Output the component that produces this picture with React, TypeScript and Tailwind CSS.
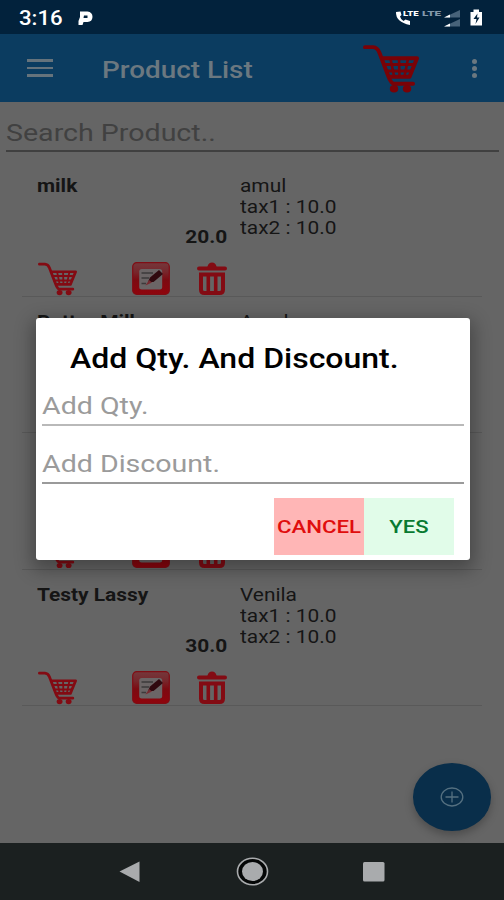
import type { ReactNode } from 'react';

const products = [
  { name: 'milk', brand: 'amul', price: '20.0' },
  { name: 'Butter Milk', brand: 'Amul', price: '15.0' },
  { name: 'Lassy', brand: 'Amul', price: '25.0' },
  { name: 'Testy Lassy', brand: 'Venila', price: '30.0' },
];

// Text on this screen is set wider than Roboto's natural width.
function Wide({
  children,
  scale = 'scale-x-[1.16]',
  className = '',
}: {
  children: ReactNode;
  scale?: string;
  className?: string;
}) {
  return (
    <span className={`block w-max origin-left whitespace-nowrap ${scale} ${className}`}>
      {children}
    </span>
  );
}

function CartIcon({ className }: { className: string }) {
  return (
    <svg viewBox="0 0 56 50" preserveAspectRatio="none" className={className} fill="none" stroke="currentColor">
      <path d="M2 3.2H10Q14.500 3.500 16.500 9L25 32Q28 40.500 31 40.500H50" strokeWidth="4" strokeLinecap="round" />
      <path d="M18.500 14.500H54L46.500 33.500H25" strokeWidth="4" strokeLinejoin="round" />
      <path d="M20 21H50M22 27.500H48" strokeWidth="3" />
      <path d="M27.500 15L31 33M36 15L36.500 33M45 15L41.500 33" strokeWidth="2.600" />
      <ellipse cx="31" cy="45.700" rx="4.200" ry="3.900" fill="currentColor" stroke="none" />
      <ellipse cx="44" cy="45.700" rx="4.200" ry="3.900" fill="currentColor" stroke="none" />
    </svg>
  );
}

function EditIcon() {
  return (
    <svg viewBox="0 0 38 33" preserveAspectRatio="none" className="h-[33px] w-[38px]">
      <defs>
        <linearGradient id="edit" x1="0" y1="0" x2="0" y2="1">
          <stop offset="0" stopColor="#74383c" />
          <stop offset="0.3" stopColor="#77262b" />
          <stop offset="0.55" stopColor="#7c0a11" />
          <stop offset="1" stopColor="#90040c" />
        </linearGradient>
      </defs>
      <rect x="0.7" y="0.7" width="36.6" height="31.6" rx="4" fill="url(#edit)" stroke="#800d14" strokeWidth="1.2" />
      <rect x="7.200" y="7" width="23" height="20.500" rx="2.500" fill="#6b6566" />
      <path d="M9.500 11H21M9.500 16H17M9.500 21.500H14" stroke="#3d3a3b" strokeWidth="1.300" />
      <path d="M16 20L18 15.500L27 8L31 12L21.500 20Z" fill="#30090f" />
      <path d="M13.500 23.500L17 18L20 20.500Z" fill="#762b31" />
    </svg>
  );
}

function TrashIcon() {
  return (
    <svg viewBox="0 0 30 33" preserveAspectRatio="none" className="h-[33px] w-[30px]" fill="none" stroke="#830b13">
      <path d="M2 6.500H28" strokeWidth="4" strokeLinecap="round" />
      <path d="M10.500 6V4.500Q11.500 0.500 15 0.500Q18.500 0.500 19.500 4.500V6Z" fill="#830b13" stroke="none" />
      <path d="M4 12.500H26V27.500Q26 31 22.500 31H7.500Q4 31 4 27.500Z" strokeWidth="4" />
      <path d="M11.300 12V29M18.700 12V29" strokeWidth="3.600" />
    </svg>
  );
}

function ProductRow({ name, brand, price }: { name: string; brand: string; price: string }) {
  return (
    <div className="mx-[22px] flex h-[136.300px] border-b border-[#595959] pt-[14px] text-[18px] leading-[21.300px] text-[#151515]">
      <div className="flex w-[218px] flex-col pl-[15px]">
        <Wide className="font-bold">{name}</Wide>
        <div className="mt-[30px] flex justify-end pr-[13px] font-bold">
          <span className="block origin-right scale-x-[1.16]">{price}</span>
        </div>
        <div className="mt-[15px] flex">
          <CartIcon className="ml-px h-[33.500px] w-[39px] text-[#830b13]" />
          <div className="ml-[55px]"><EditIcon /></div>
          <div className="ml-[27px]"><TrashIcon /></div>
        </div>
      </div>
      <div>
        <Wide>{brand}</Wide>
        <Wide>tax1 : 10.0</Wide>
        <Wide>tax2 : 10.0</Wide>
      </div>
    </div>
  );
}

function StatusBar() {
  return (
    <div className="flex h-[34px] items-center bg-[#02223c] pt-[2px] pl-[19px] text-white">
      <Wide scale="scale-x-[1.11]" className="text-[20px] font-medium">3:16</Wide>
      <svg viewBox="0 0 16 16" className="ml-[19px] h-[16px] w-[16px]" fill="white">
        <path d="M3 1.500H10.500Q15.500 2 15.500 7Q15.200 11.800 10.500 12H6.500L5.500 15H1.500V11L3 7Z" />
        <path d="M7 5.500H10.500V8H6.500Z" fill="#02223c" />
      </svg>
      <svg viewBox="0 0 92 20" className="mr-[20px] mb-[2px] ml-auto h-[20px] w-[92px]">
        <path d="M4 5Q3.500 15 18 18V14L13.500 12.500L11.500 14Q8.500 12 8 9.500L9.500 8L8.500 4.500Z" fill="white" />
        <g fontSize="8" fontWeight="900" fontFamily="Roboto">
          <text x="11" y="9" fill="white" textLength="15.500" lengthAdjust="spacingAndGlyphs">LTE</text>
          <text x="30" y="9" fill="#8298aa" textLength="19" lengthAdjust="spacingAndGlyphs">LTE</text>
        </g>
        <path d="M52 10.500L68 3V10.500ZM52 19.500L68 12V19.500Z" fill="#47637a" />
        <path d="M52 10.500L58 7.500V10.500ZM52 19.500L58 16.500V19.500Z" fill="white" />
        <path d="M78.500 5H81.500V2.500H87V5H90V18.500H78.500Z" fill="white" />
        <path d="M85.500 6.500L81.500 12H84.500L83.500 17L87.500 10.500H85Z" fill="#02223c" />
      </svg>
    </div>
  );
}

function AppBar() {
  return (
    <div className="flex h-[68px] items-center bg-[#0b3c60] pl-[27px]">
      <div className="flex w-[26px] flex-col gap-[5px]">
        <div className="h-[2.500px] bg-[#65737c]" />
        <div className="h-[2.500px] bg-[#65737c]" />
        <div className="h-[2.500px] bg-[#65737c]" />
      </div>
      <Wide className="mt-[3px] ml-[49px] text-[24px] font-medium text-[#6b7880]">Product List</Wide>
      <CartIcon className="ml-auto h-[49px] w-[56px] text-[#790207]" />
      <div className="mr-[27px] ml-[53px] flex flex-col gap-[2px]">
        <div className="h-[5px] w-[5px] rounded-full bg-[#6b7880]" />
        <div className="h-[5px] w-[5px] rounded-full bg-[#6b7880]" />
        <div className="h-[5px] w-[5px] rounded-full bg-[#6b7880]" />
      </div>
    </div>
  );
}

function Field({ label, className }: { label: string; className: string }) {
  return (
    <div className={`mx-[6px] border-b-2 text-[24px] leading-[28px] text-[#9b9b9b] ${className}`}>
      <Wide scale="scale-x-[1.19]">{label}</Wide>
    </div>
  );
}

function Dialog() {
  return (
    <div className="absolute top-[317.500px] left-[35.500px] h-[242.500px] w-[434.500px] rounded-[3px] bg-white shadow-[0_6px_18px_4px_rgba(0,0,0,0.3)]">
      <Wide scale="scale-x-[1.185]" className="mt-[25px] ml-[34px] text-[27px] leading-[32px] font-medium text-black">
        Add Qty. And Discount.
      </Wide>
      <Field label="Add Qty." className="mt-[17px] h-[34px] border-[#b9b9b9]" />
      <Field label="Add Discount." className="mt-[24.500px] h-[34px] border-[#9a9a9a]" />
      <div className="mt-[14px] mr-[16.500px] flex justify-end text-[19px] font-medium">
        <button className="flex h-[57px] w-[90px] items-center justify-center bg-[#ffb6b6] pt-[2px] text-[#e00d0d]">
          <span className="scale-x-[1.17]">CANCEL</span>
        </button>
        <button className="flex h-[57px] w-[90px] items-center justify-center bg-[#e1fce9] pt-[2px] text-[#087a32]">
          <span className="scale-x-[1.16]">YES</span>
        </button>
      </div>
    </div>
  );
}

function NavBar() {
  return (
    <div className="h-[57px] bg-[#1b2020]">
      <svg viewBox="0 0 504 57" className="h-[57px] w-[504px]">
        <path d="M119.500 28.500L139.500 18.500V39Z" fill="#a9abad" />
        <ellipse cx="252.500" cy="28.500" rx="15" ry="13.300" fill="#050707" stroke="#a9abad" strokeWidth="1.600" />
        <ellipse cx="252.500" cy="28.500" rx="10.500" ry="9.500" fill="#a9abad" />
        <rect x="363" y="19" width="21.500" height="19.500" rx="1.500" fill="#a9abad" />
      </svg>
    </div>
  );
}

export default function App() {
  return (
    <div className="relative flex h-[900px] w-[504px] flex-col overflow-hidden bg-[#656565] font-['Roboto',sans-serif]">
      <StatusBar />
      <AppBar />
      <div className="mr-[5px] mb-[9.300px] ml-[6px] h-[49.500px] border-b-2 border-[#404040] pt-[17px] text-[24px] leading-[28px] text-[#414141]">
        <Wide scale="scale-x-[1.19]">Search Product..</Wide>
      </div>
      <div className="flex-1">
        {products.map((product) => (
          <ProductRow key={product.name} {...product} />
        ))}
      </div>
      <NavBar />

      <button className="absolute top-[763px] left-[412.500px] flex h-[68px] w-[78.500px] items-center justify-center rounded-[50%] bg-[#092e4a] shadow-[0_4px_8px_rgba(0,0,0,0.25)]">
        <svg viewBox="0 0 24 20" className="h-[20px] w-[24px]" fill="none" stroke="#557080" strokeWidth="1.300">
          <ellipse cx="12" cy="10" rx="10.800" ry="9" />
          <path d="M12 4.500V15.500M5.500 10H18.500" />
        </svg>
      </button>
      <Dialog />
    </div>
  );
}
